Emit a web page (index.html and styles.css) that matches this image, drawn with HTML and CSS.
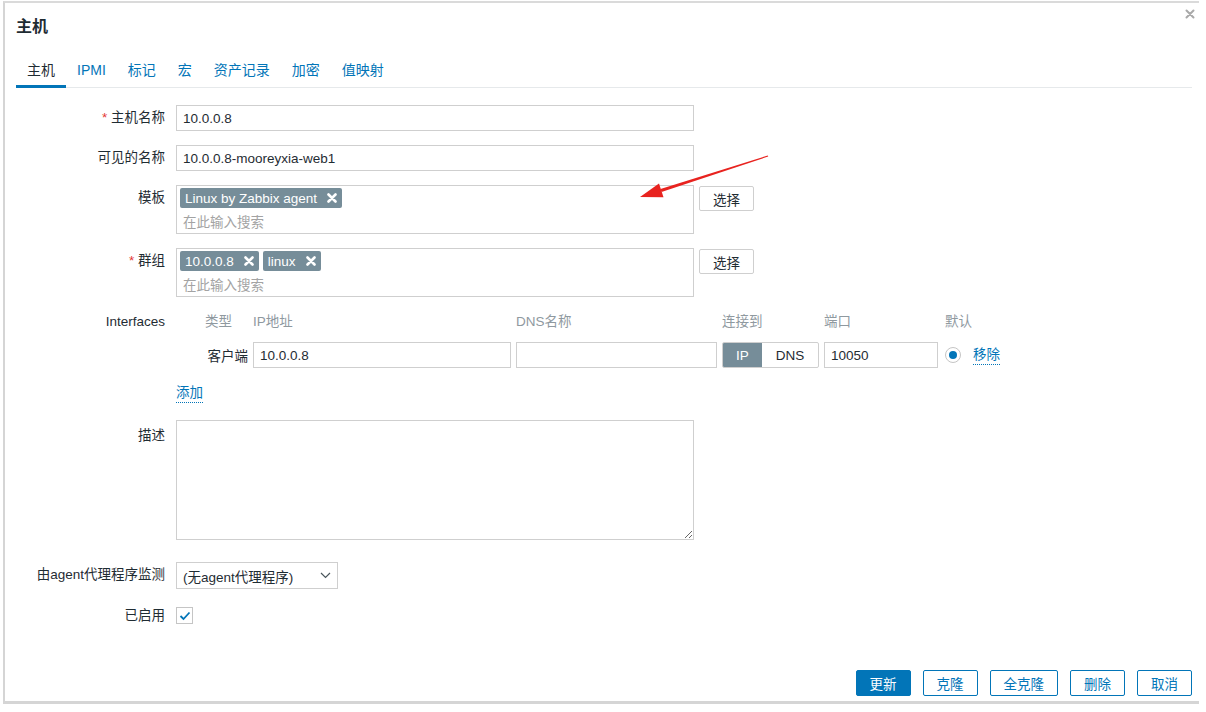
FILE: index.html
```html
<!DOCTYPE html>
<html lang="zh-CN">
<head>
<meta charset="utf-8">
<title>主机</title>
<link rel="stylesheet" href="styles.css">
</head>
<body>
<div class="dialog">
  <button class="close" aria-label="关闭">
    <svg width="10" height="10" viewBox="0 0 10 10"><path d="M1.5 1.5L8.5 8.5M8.5 1.5L1.5 8.5" stroke="#a9a9a9" stroke-width="2" stroke-linecap="round"/></svg>
  </button>
  <h1 class="title">主机</h1>
  <ul class="tabs">
    <li class="tab active">主机</li>
    <li class="tab">IPMI</li>
    <li class="tab">标记</li>
    <li class="tab">宏</li>
    <li class="tab">资产记录</li>
    <li class="tab">加密</li>
    <li class="tab">值映射</li>
  </ul>

  <div class="form">
    <div class="row">
      <label class="lbl"><span class="req">*</span> 主机名称</label>
      <input class="text" value="10.0.0.8">
    </div>
    <div class="row">
      <label class="lbl">可见的名称</label>
      <input class="text" value="10.0.0.8-mooreyxia-web1">
    </div>
    <div class="row">
      <label class="lbl">模板</label>
      <div class="multi-wrap">
        <div class="multi">
          <div class="tags">
            <span class="tag">Linux by Zabbix agent<svg class="x" width="10" height="10" viewBox="0 0 10 10"><path d="M1.5 1.5L8.5 8.5M8.5 1.5L1.5 8.5" stroke="#fff" stroke-width="2.6" stroke-linecap="round"/></svg></span>
          </div>
          <div class="placeholder">在此输入搜索</div>
        </div>
        <button class="btn-select">选择</button>
      </div>
    </div>
    <div class="row">
      <label class="lbl"><span class="req">*</span> 群组</label>
      <div class="multi-wrap">
        <div class="multi">
          <div class="tags">
            <span class="tag">10.0.0.8<svg class="x" width="10" height="10" viewBox="0 0 10 10"><path d="M1.5 1.5L8.5 8.5M8.5 1.5L1.5 8.5" stroke="#fff" stroke-width="2.6" stroke-linecap="round"/></svg></span>
            <span class="tag">linux<svg class="x" width="10" height="10" viewBox="0 0 10 10"><path d="M1.5 1.5L8.5 8.5M8.5 1.5L1.5 8.5" stroke="#fff" stroke-width="2.6" stroke-linecap="round"/></svg></span>
          </div>
          <div class="placeholder">在此输入搜索</div>
        </div>
        <button class="btn-select">选择</button>
      </div>
    </div>
    <div class="row ifaces-row">
      <label class="lbl short">Interfaces</label>
      <div class="ifaces">
        <div class="iface-grid">
          <div class="th">类型</div>
          <div class="th">IP地址</div>
          <div class="th">DNS名称</div>
          <div class="th">连接到</div>
          <div class="th">端口</div>
          <div class="th th-def">默认</div>

          <div class="type">客户端</div>
          <input class="text fill" value="10.0.0.8">
          <input class="text fill" value="">
          <div class="toggle"><span class="seg on">IP</span><span class="seg">DNS</span></div>
          <input class="text fill" value="10050">
          <div class="def">
            <span class="radio"><span class="dot"></span></span>
            <a class="link">移除</a>
          </div>
        </div>
        <a class="link add">添加</a>
      </div>
    </div>
    <div class="row desc-row">
      <label class="lbl desc-lbl">描述</label>
      <textarea class="textarea"></textarea>
    </div>
    <div class="row">
      <label class="lbl">由agent代理程序监测</label>
      <div class="select">
        <span>(无agent代理程序)</span>
        <svg width="11" height="7" viewBox="0 0 11 7"><path d="M1 1l4.5 4.5L10 1" fill="none" stroke="#4a565c" stroke-width="1.2"/></svg>
      </div>
    </div>
    <div class="row">
      <label class="lbl">已启用</label>
      <span class="checkbox">
        <svg width="12" height="10" viewBox="0 0 12 10"><path d="M1.5 5l3 3 6-6.5" fill="none" stroke="#0275b8" stroke-width="1.8"/></svg>
      </span>
    </div>
  </div>

  <div class="footer">
    <button class="btn primary">更新</button>
    <button class="btn">克隆</button>
    <button class="btn">全克隆</button>
    <button class="btn">删除</button>
    <button class="btn">取消</button>
  </div>
</div>

<svg class="arrow" width="145" height="55" viewBox="0 0 145 55">
  <polygon points="137.8,5.5 30.5,38.9 31.5,41.9 138.2,6.5" fill="#e8231f"/>
  <polygon points="10,47 29,33.5 33.5,47.3" fill="#e8231f"/>
</svg>
</body>
</html>
```

FILE: styles.css
```css
* { box-sizing: border-box; }
html, body { margin: 0; padding: 0; background: #fff; }
body {
  font-family: "Liberation Sans", Arial, "Noto Sans CJK SC", sans-serif;
  font-size: 13.5px;
  color: #1f2c33;
}

.dialog {
  position: relative;
  margin: 1px 0 0 3px;
  width: 1196px;
  height: 703px;
  border-top: 2px solid #dadada;
  border-left: 2px solid #d5d5d5;
  border-bottom: 3px solid #d5d5d5;
  padding: 0 7px 0 11px;
  display: flex;
  flex-direction: column;
}

.close {
  position: absolute;
  top: 6px;
  right: 4px;
  width: 10px;
  height: 10px;
  padding: 0;
  border: 0;
  background: none;
  display: flex;
}

.title {
  margin: 12px 0 0;
  font-size: 16px;
  line-height: 24px;
  font-weight: bold;
}

.tabs {
  list-style: none;
  margin: 16px 0 0;
  padding: 0;
  display: flex;
  border-bottom: 1px solid #e6e9eb;
}
.tab {
  padding: 5px 11px;
  line-height: 20px;
  font-size: 14px;
  color: #0275b8;
  border-bottom: 3px solid transparent;
  margin-bottom: -1px;
}
.tab.active {
  color: #1f2c33;
  border-bottom-color: #0275b8;
}

.form { padding-top: 17px; }

.row {
  display: flex;
  align-items: flex-start;
  margin-bottom: 14px;
}
.lbl {
  width: 160px;
  flex: none;
  padding-right: 11px;
  text-align: right;
  line-height: 26px;
  white-space: nowrap;
}
.lbl.short { line-height: 22px; }
.req { color: #e33734; }

.text {
  width: 518px;
  height: 26px;
  border: 1px solid #cfcfcf;
  padding: 0 6px;
  font: inherit;
  color: inherit;
  background: #fff;
  outline: none;
  border-radius: 0;
  margin: 0;
}
.text.fill { width: 100%; }

.multi-wrap {
  display: flex;
  align-items: flex-start;
  gap: 5px;
}
.multi {
  width: 518px;
  height: 49px;
  border: 1px solid #cfcfcf;
  padding: 2px 3px 0;
  overflow: hidden;
}
.tags {
  display: flex;
  gap: 4px;
  height: 21px;
}
.tag {
  display: inline-flex;
  align-items: center;
  height: 20px;
  background: #768d99;
  color: #fff;
  padding: 0 5px;
  gap: 10px;
  border-radius: 2px;
}
.placeholder {
  margin-top: 2px;
  line-height: 24px;
  color: #a3a3a3;
  padding-left: 3px;
}
.btn-select {
  height: 25px;
  margin-top: 1px;
  padding: 0 13px;
  border: 1px solid #cfcfcf;
  background: #fff;
  font: inherit;
  color: #1f2c33;
  border-radius: 2px;
}

.ifaces-row { margin-bottom: 17px; }
.ifaces { display: flex; flex-direction: column; align-items: flex-start; }
.iface-grid {
  margin-left: 29px;
  display: grid;
  grid-template-columns: 43px 258px 201px 97px 114px auto;
  column-gap: 5px;
  row-gap: 9px;
  align-items: center;
}
.th {
  line-height: 22px;
  color: #8f999f;
}
.th-def { padding-left: 2px; }
.type { text-align: right; white-space: nowrap; }
.toggle {
  display: flex;
  height: 26px;
  border: 1px solid #cfcfcf;
  border-radius: 2px;
  overflow: hidden;
}
.seg {
  display: flex;
  align-items: center;
  justify-content: center;
  width: 56px;
  color: #1f2c33;
}
.seg.on {
  width: 39px;
  background: #768d99;
  color: #fff;
}
.def {
  display: flex;
  align-items: center;
  gap: 12px;
  padding-left: 2px;
}
.radio {
  width: 16px;
  height: 16px;
  border: 1px solid #c5c5c5;
  border-radius: 50%;
  display: flex;
  align-items: center;
  justify-content: center;
}
.dot {
  width: 8px;
  height: 8px;
  border-radius: 50%;
  background: #0275b8;
}
.link {
  color: #0275b8;
  line-height: 18px;
  border-bottom: 1px dotted #0275b8;
  cursor: pointer;
}
.add { margin-top: 16px; }

.desc-row { margin-bottom: 22px; }
.desc-lbl { padding-top: 3px; }
.textarea {
  display: block;
  width: 518px;
  height: 120px;
  border: 1px solid #cfcfcf;
  font: inherit;
  margin: 0;
  outline: none;
  resize: both;
}

.select {
  width: 162px;
  height: 27px;
  border: 1px solid #cfcfcf;
  display: flex;
  align-items: center;
  justify-content: space-between;
  padding: 0 6px;
}

.checkbox {
  width: 17px;
  height: 17px;
  margin-top: 4px;
  border: 1px solid #c5c5c5;
  display: flex;
  align-items: center;
  justify-content: center;
}

.footer {
  margin-top: auto;
  display: flex;
  justify-content: flex-end;
  gap: 12px;
  padding-bottom: 5px;
}
.btn {
  height: 26px;
  padding: 0 13px;
  border: 1px solid #0275b8;
  background: #fff;
  color: #0275b8;
  font: inherit;
  border-radius: 2px;
}
.btn.primary {
  background: #0275b8;
  color: #fff;
}

.arrow {
  position: absolute;
  left: 630px;
  top: 150px;
}
```
